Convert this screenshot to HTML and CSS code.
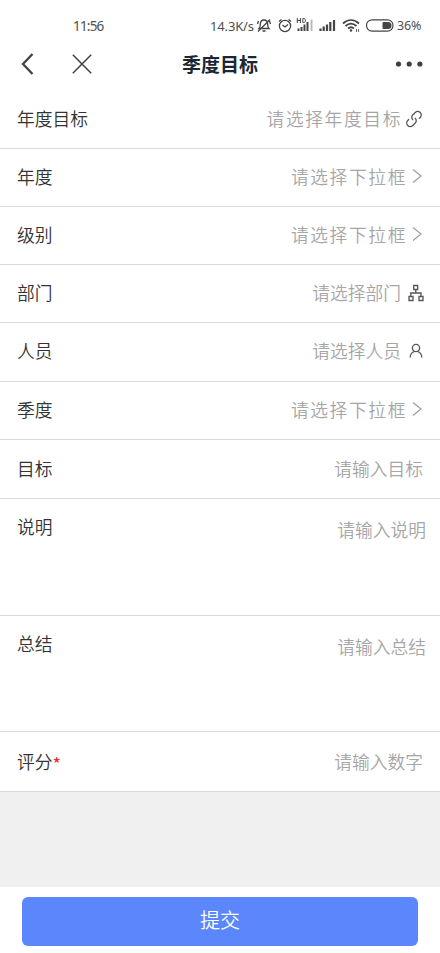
FILE: index.html
```html
<!DOCTYPE html>
<html lang="zh-CN">
<head>
<meta charset="utf-8">
<meta name="viewport" content="width=device-width, initial-scale=1">
<title>季度目标</title>
<link rel="stylesheet" href="styles.css">
</head>
<body>
<div class="app">
  <div class="status">
    <span class="clock">11:56</span>
    <span class="speed">14.3K/s</span>
    <svg class="status-icons" width="140" height="20" viewBox="256 15 140 20" fill="none" stroke="#444" stroke-width="1.3">
      <path d="M259 28.500h10c-1-1-1.300-2-1.300-4 0-2.800-1.500-4.500-3.700-4.500s-3.700 1.700-3.700 4.500c0 2-.3 3-1.300 4zM262.500 31h3M258 31.500l12-12M257.500 24l1-3M270.500 24l-1-3"/>
      <circle cx="285" cy="26" r="5.600"/><path d="M282.500 25l2.500 2 3-2.500M279 21.500l2.500-2M291 21.500l-2.500-2"/>
      <path d="M297.300 18v5M300.400 18v5M297.300 20.500h3M302.800 18.500v4h1c2.200 0 2.200-4 0-4z" stroke-width="1"/>
      <path d="M298.500 28.500V31M301.500 27v4M304.500 24.500V31M307.500 22v9" stroke-width="2"/><path d="M311.500 19.500V31" stroke="#bbb" stroke-width="2"/>
      <path d="M320.500 28.500V31M323.700 26.500V31M327 24.500V31M330.300 22v9M334 20v11" stroke-width="2.200"/>
      <path d="M343 23.500c5-4.500 11-4.500 16 0M345.500 26c3.500-3 7.500-3 11 0M348 28.500c2-1.700 4-1.700 6 0" stroke-width="1.800"/><circle cx="351" cy="30.500" r="1.200" fill="#444" stroke="none"/><path d="M356.500 29v3M358.500 29v3" stroke-width=".8"/>
      <rect x="366.500" y="19.800" width="26.500" height="11.400" rx="5.600" stroke-width="1.200"/><path d="M383.500 22h4.500a3.500 3.500 0 0 1 0 7h-4.500a1 1 0 0 1-1-1v-5a1 1 0 0 1 1-1z" fill="#444" stroke="none"/>
    </svg>
    <span class="percent">36%</span>
  </div>
  <header class="nav">
    <svg class="back" width="14" height="22" viewBox="0 0 14 22"><path d="M11.500 1L2 11l9.500 10"/></svg>
    <svg class="close" width="20" height="20" viewBox="0 0 20 20"><path d="M.8.8l18.400 18.400M19.200.8L.8 19.200"/></svg>
    <h1 class="title">季度目标</h1>
    <svg class="more" width="28" height="6" viewBox="0 0 28 6"><circle cx="3.500" cy="3" r="2.600"/><circle cx="14.200" cy="3" r="2.600"/><circle cx="24.900" cy="3" r="2.600"/></svg>
  </header>
  <main class="form">
    <div class="row first"><span class="label">年度目标</span><span class="value wide">请选择年度目标</span>
      <svg class="icon link" width="18" height="18" viewBox="0 0 18 18"><g transform="rotate(-45 9 9)"><path d="M7.600 9V8.600A3.300 3.300 0 0 1 10.900 5.300H14.500a3.500 3.500 0 0 1 0 7h-1.800M10.400 9v.4a3.300 3.300 0 0 1-3.300 3.300H3.500a3.500 3.500 0 0 1 0-7h1.800"/></g></svg></div>
    <div class="row"><span class="label">年度</span><span class="value wide">请选择下拉框</span>
      <svg class="icon arrow" width="10" height="16" viewBox="0 0 10 16"><path d="M1 1.500L9 8l-8 6.500"/></svg></div>
    <div class="row"><span class="label">级别</span><span class="value wide">请选择下拉框</span>
      <svg class="icon arrow" width="10" height="16" viewBox="0 0 10 16"><path d="M1 1.500L9 8l-8 6.500"/></svg></div>
    <div class="row"><span class="label">部门</span><span class="value">请选择部门</span>
      <svg class="icon tree" width="16" height="18" viewBox="0 0 16 18"><path d="M5.700 1.500h4v4h-4zM1 12.500h4v4H1zM11 12.500h4v4h-4zM7.800 5.500V9M2.800 12.500V9h10.200v3.500"/></svg></div>
    <div class="row tall"><span class="label">人员</span><span class="value">请选择人员</span>
      <svg class="icon person" width="14" height="16" viewBox="0 0 14 16"><circle cx="7" cy="5" r="3.600"/><path d="M1.200 14.500c0-3 1.500-5 4-6M12.800 14.500c0-3-1.500-5-4-6"/></svg></div>
    <div class="row"><span class="label">季度</span><span class="value wide">请选择下拉框</span>
      <svg class="icon arrow" width="10" height="16" viewBox="0 0 10 16"><path d="M1 1.500L9 8l-8 6.500"/></svg></div>
    <div class="row input"><span class="label">目标</span><span class="value">请输入目标</span></div>
    <div class="row area long"><span class="label">说明</span><span class="value">请输入说明</span></div>
    <div class="row area"><span class="label">总结</span><span class="value">请输入总结</span></div>
    <div class="row score"><span class="label">评分</span><span class="required">*</span><span class="value">请输入数字</span></div>
  </main>
  <footer class="footer"><button class="submit" type="button">提交</button></footer>
</div>
</body>
</html>
```
FILE: styles.css
```css
* { box-sizing: border-box; }
body {
  margin: 0;
  background: #fff;
  font-family: "Noto Sans CJK SC", sans-serif;
}
.app {
  display: flex;
  flex-direction: column;
  width: 440px;
  height: 953px;
  background: #f0f0f0;
}
.status {
  display: flex;
  height: 40px;
  padding: 15px 0 0 73px;
  background: #fff;
  color: #505050;
  font: 13.5px/22px "Noto Sans", sans-serif;
  white-space: nowrap;
}
.clock { width: 137px; letter-spacing: -0.8px; }
.speed { width: 46px; font-size: 13px; letter-spacing: -0.15px; }
.status-icons { flex: none; }
.percent { margin-left: 1px; font-size: 12.5px; letter-spacing: -0.2px; }
.nav {
  display: grid;
  grid-template-columns: 51px 110px 1fr 45px;
  align-items: center;
  height: 50px;
  padding: 0 0 3px 21px;
  background: #fff;
}
.back, .close { fill: none; stroke: #3c434d; }
.back { stroke-width: 2.3; }
.close { stroke-width: 1.5; }
.title {
  margin: 0;
  color: #1b2733;
  font-size: 19px;
  line-height: 28px;
  font-weight: 700;
}
.more { fill: #3d3f45; }
.form { background: #fff; }
.row {
  display: flex;
  align-items: center;
  height: 58px;
  padding: 0 16px 3px 17px;
  border-bottom: 1px solid #d9d9d9;
  font-size: 17.75px;
  line-height: 26px;
}
.row.first { height: 59px; padding-bottom: 2px; border-color: #dedede; }
.tall { height: 59px; }
.row.tall { padding-bottom: 4px; }
.row.input { height: 59px; padding: 0 17px 2px; }
.label { color: #333; font-weight: 350; }
.value { margin-left: auto; color: #a6a6a6; font-weight: 350; }
.wide { letter-spacing: 1.6px; }
.required { padding-top: 5px; color: #f5222d; font-size: 18px; }
.icon { flex: none; fill: none; stroke: #555; stroke-width: 1.3; }
.link { margin: 2px 1px 0 3px; }
.arrow { margin: 0 2px 1px 5px; stroke: #999; stroke-width: 1.1; }
.tree { margin: 2px 0 0 7px; }
.person { margin: 2px 1px 0 8px; }
.row.area {
  align-items: flex-start;
  height: 116px;
  padding: 14px 14px 0 17px;
}
.row.long { height: 117px; }
.area .value { padding-top: 3px; }
.row.score { height: 60px; padding: 0 17px 2px; }
.footer {
  height: 66px;
  margin-top: auto;
  padding: 10px 22px 0;
  background: #fff;
}
.submit {
  display: block;
  width: 100%;
  height: 49px;
  padding: 0 0 4px;
  border: 0;
  border-radius: 6px;
  background: #5c86fb;
  color: #fff;
  font: 350 20px/28px "Noto Sans CJK SC", sans-serif;
}
```
